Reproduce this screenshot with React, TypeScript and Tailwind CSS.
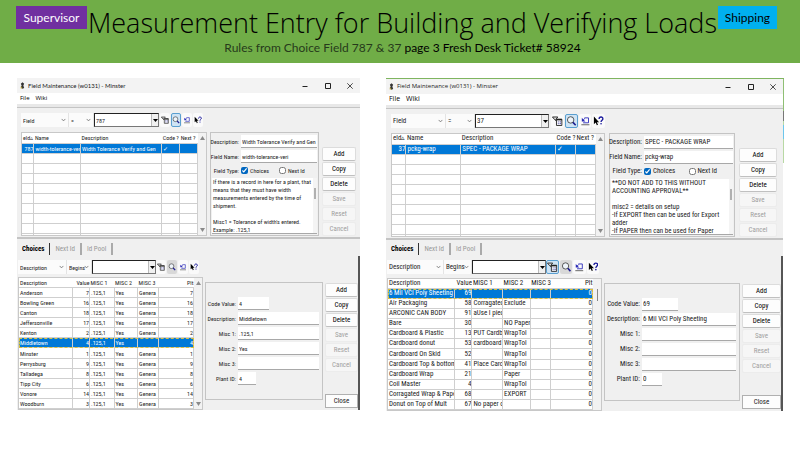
import React from 'react';

type Row = string[];

interface Screen {
  id: string;
  textClass: string;
  captionClass: string;
  menuClass: string;
  topPane: string;
  topGrid: string;
  topBar: string;
  topIcons: string;
  tabsClass: string;
  lowGrid: string;
  lowBar: string;
  lowIcons: string;
  lowBarGap: string;
  topCols: number[];
  lowCols: number[];
  labelTop: string;
  labelLow: string;
  codeWidth: string;
  plantWidth: string;
  query: string;
  field: Row;
  description: string;
  name: string;
  notes: string;
  choices: Row[];
  selected: number;
  treeActive: boolean;
  detail: { code: string; description: string; misc1: string; misc2: string; misc3: string; plant: string };
}

const tolerance: Screen = {
  id: 'tolerance',
  textClass: 'text-[6px]',
  captionClass: "text-[6px] font-['Lato','Open_Sans',sans-serif]",
  menuClass: 'text-[6px]',
  topPane: 'px-1',
  topGrid: 'grid-cols-[186fr_109fr_34fr] gap-x-[3px]',
  topBar: 'grid-cols-[48fr_25fr_65fr_48fr]',
  topIcons: 'pl-px pr-1',
  tabsClass: 'h-[17px]',
  lowGrid: 'grid-cols-[185fr_118fr_33fr]',
  lowBar: 'grid-cols-[49fr_25fr_64fr_47fr]',
  lowIcons: 'pr-1',
  lowBarGap: 'mb-[3px]',
  topCols: [12, 47, 82, 18, 18],
  lowCols: [55, 17, 25, 24, 21, 36],
  labelTop: 'w-[27px]',
  labelLow: 'w-[30px]',
  codeWidth: 'w-[31px]',
  plantWidth: 'w-[18px]',
  query: '787',
  field: ['787', 'width-tolerance-veri', 'Width Tolerance Verify and Gen', '✓', ''],
  description: 'Width Tolerance Verify and Gen',
  name: 'width-tolerance-veri',
  notes:
    "If there is a record in here for a plant, that\nmeans that they must have width\nmeasurements entered by the time of\nshipment.\n\nMisc1 = Tolerance of width's entered.\nExample: .125,1",
  choices: [
    ['Anderson', '7', '.125,1', 'Yes', 'Genera', '7'],
    ['Bowling Green', '16', '.125,1', 'Yes', 'Genera', '16'],
    ['Canton', '18', '.125,1', 'Yes', 'Genera', '18'],
    ['Jeffersonville', '17', '.125,1', 'Yes', 'Genera', '17'],
    ['Kenton', '2', '.125,1', 'Yes', 'Genera', '2'],
    ['Middletown', '4', '.125,1', 'Yes', '', '4'],
    ['Minster', '1', '.125,1', 'Yes', 'Genera', '1'],
    ['Perrysburg', '9', '.125,1', 'Yes', 'Genera', '9'],
    ['Talladega', '8', '.125,1', 'Yes', 'Genera', '8'],
    ['Tipp City', '6', '.125,1', 'Yes', 'Genera', '6'],
    ['Vonore', '14', '.125,1', 'Yes', 'Genera', '14'],
    ['Woodburn', '3', '.125,1', 'Yes', 'Genera', '3'],
  ],
  selected: 5,
  treeActive: false,
  detail: { code: '4', description: 'Middletown', misc1: '.125,1', misc2: 'Yes', misc3: '', plant: '4' },
};

const packaging: Screen = {
  id: 'packaging',
  textClass: 'text-[7px]',
  captionClass: "text-[6px] font-['Open_Sans','Noto_Sans',sans-serif]",
  menuClass: 'text-[7px]',
  topPane: 'pl-[5px] pr-[6px]',
  topGrid: 'grid-cols-[214fr_126fr_38fr] gap-x-1',
  topBar: 'grid-cols-[55fr_29fr_74fr_56fr]',
  topIcons: 'pl-[2px]',
  tabsClass: 'h-4',
  lowGrid: 'grid-cols-[215fr_136fr_39fr]',
  lowBar: 'grid-cols-[57fr_28fr_74fr_56fr]',
  lowIcons: 'pr-[3px]',
  lowBarGap: 'mb-1',
  topCols: [14, 55, 95, 20, 20],
  lowCols: [67, 18, 31, 28, 21, 42],
  labelTop: 'w-[31px]',
  labelLow: 'w-[35px]',
  codeWidth: 'w-[36px]',
  plantWidth: 'w-[20px]',
  query: '37',
  field: ['37', 'pckg-wrap', 'SPEC - PACKAGE WRAP', '✓', ''],
  description: 'SPEC - PACKAGE WRAP',
  name: 'pckg-wrap',
  notes:
    '**DO NOT ADD TO THIS WITHOUT\nACCOUNTING APPROVAL**\n\nmisc2 = details on setup\n-If EXPORT then can be used for Export\nadder\n-If PAPER then can be used for Paper',
  choices: [
    ['6 Mil VCI Poly Sheeting', '69', '', '', '', '0'],
    ['Air Packaging', '58', 'Corragatec', 'Exclude', '', '0'],
    ['ARCONIC CAN BODY', '91', 'aUse I piec', '', '', '0'],
    ['Bare', '30', '', 'NO Paper', '', '0'],
    ['Cardboard & Plastic', '13', 'PUT Cardb', 'WrapTol', '', '0'],
    ['Cardboard donut', '53', 'cardboard', 'WrapTol', '', '0'],
    ['Cardboard On Skid', '52', '', 'WrapTol', '', '0'],
    ['Cardboard Top & bottom', '41', 'Place Carc', 'WrapTol', '', '0'],
    ['Cardboard Wrap', '21', '', 'Paper', '', '0'],
    ['Coil Master', '4', '', 'WrapTol', '', '0'],
    ['Corragated Wrap & Pape', '68', '', 'EXPORT', '', '0'],
    ['Donut on Top of Mult', '67', 'No paper c', '', '', '0'],
  ],
  selected: 0,
  treeActive: true,
  detail: { code: '69', description: '6 Mil VCI Poly Sheeting', misc1: '', misc2: '', misc3: '', plant: '0' },
};

function TreeIcon() {
  return (
    <svg viewBox="0 0 12 12" className="h-full w-full" fill="none" stroke="#222" strokeWidth="1">
      <path d="M.5 1.500h6L4.500 4v1.500L3 4.500z" fill="#ddd" />
      <path d="M5 4h6v7H5z" fill="#fff" />
      <path d="M5 4.500h6" strokeWidth="1.600" />
      <path d="M6.500 7h1M8.500 7H10M6.500 9h1M8.500 9H10" stroke="#2a2a90" />
    </svg>
  );
}

function LensIcon() {
  return (
    <svg viewBox="0 0 12 12" className="h-full w-full" fill="none">
      <circle cx="5.200" cy="4.800" r="3.600" stroke="#333" strokeWidth="0.900" fill="#eef4fa" />
      <path d="M7.800 7.500l3 3.200" stroke="#1c1c90" strokeWidth="1.800" />
    </svg>
  );
}

function ReturnIcon() {
  return (
    <svg viewBox="0 0 12 12" className="h-full w-full" fill="none">
      <path d="M5 2.500h4.500v5.500H3.500" stroke="#2a2ab8" strokeWidth="1" />
      <path d="M2 2.500v4h4z" fill="#2a2ab8" />
      <path d="M3.500 5L5.500 3" stroke="#2a2ab8" />
      <path d="M1.500 10.200h9" stroke="#444" strokeWidth="0.900" />
    </svg>
  );
}

function HelpIcon() {
  return (
    <svg viewBox="0 0 12 12" className="h-full w-full" fill="none">
      <path d="M1 1v8.500l2-1.800 1.300 3 1.300-.6-1.300-2.800h2.500z" fill="#000" />
      <path d="M6.800 3.800c0-3 4.400-3 4.200-.2-.1 1.500-2 1.500-2 3.400" stroke="#1a1a9c" strokeWidth="1.500" />
      <circle cx="9" cy="9" r="0.900" fill="#1a1a9c" />
    </svg>
  );
}

function Chevron() {
  return (
    <svg viewBox="0 0 6 4" className="pointer-events-none absolute top-1/2 right-[2px] h-[3px] w-[5px] -translate-y-1/2" fill="none" stroke="#555" strokeWidth="0.900">
      <path d="M.5.5L3 3.200 5.500.5" />
    </svg>
  );
}

function Pick({ label, value }: { label: string; value: string }) {
  return (
    <span className="relative flex min-w-0 items-center border-r border-[#e4e4e4] bg-[#fbfbfb]">
      <select aria-label={label} className="h-full w-full appearance-none bg-transparent pl-[2px] outline-none">
        <option>{value}</option>
      </select>
      <Chevron />
    </span>
  );
}

function SearchBar({ cols, icons, first, second, query, treeActive, lensActive }: {
  cols: string; icons: string; first: string; second: string; query: string; treeActive: boolean; lensActive: boolean;
}) {
  const plain = 'min-w-0 flex-1 rounded-[2px] bg-[#fafafa] p-px';
  const lit = 'min-w-0 flex-1 rounded-[2px] border border-[#5a9fd0] bg-[#cfe4f5]';
  const pressed = 'min-w-0 flex-1 rounded-[2px] bg-[#d8d8d8] p-px';
  return (
    <div className={`grid h-[14px] ${cols}`}>
      <Pick label="Search by" value={first} />
      <Pick label="Match" value={second} />
      <span className="flex min-w-0 border border-[#777] border-t-[#222] border-l-[#222] bg-white">
        <input aria-label="Search for" defaultValue={query} className="min-w-0 flex-1 bg-transparent pl-px outline-none" />
        <button aria-label="Open list" className="flex w-[7px] items-center justify-center border-l border-[#bbb] bg-[#f0f0f0]">
          <svg viewBox="0 0 5 3" className="h-[3px] w-[5px]"><path d="M0 0h5L2.500 3z" /></svg>
        </button>
      </span>
      <span className={`flex gap-px ${icons}`}>
        <button aria-label="Browse" className={treeActive ? lit : plain}><TreeIcon /></button>
        <button aria-label="Find" className={lensActive ? lit : pressed}><LensIcon /></button>
        <button aria-label="Reload" className={plain}><ReturnIcon /></button>
        <button aria-label="Help" className={plain}><HelpIcon /></button>
      </span>
    </div>
  );
}

function ColGroup({ widths }: { widths: number[] }) {
  const total = widths.reduce((a, b) => a + b, 0);
  return (
    <colgroup>
      {widths.map((w, i) => <col key={i} style={{ width: `${(w / total) * 100}%` }} />)}
    </colgroup>
  );
}

function ScrollBar({ thumb }: { thumb?: boolean }) {
  return (
    <div className="flex w-[8px] shrink-0 flex-col items-center justify-between bg-[#f2f2f2] py-[3px]">
      {thumb ? (
        <div className="mt-[7px] h-3 w-px bg-[#888]" />
      ) : (
        <>
          <svg viewBox="0 0 5 4" className="h-1 w-[5px]" fill="#8a8a8a"><path d="M0 4h5L2.500 0z" /></svg>
          <svg viewBox="0 0 5 4" className="h-1 w-[5px]" fill="#8a8a8a"><path d="M0 0h5L2.500 4z" /></svg>
        </>
      )}
    </div>
  );
}

function Buttons({ pad, close }: { pad: string; close?: boolean }) {
  const names = ['Add', 'Copy', 'Delete', 'Save', 'Reset', 'Cancel'];
  return (
    <div className={`flex min-w-0 flex-col gap-px text-[7px] ${pad}`}>
      {names.map((n, i) => (
        <button
          key={n}
          disabled={i > 2}
          className={`h-[14px] rounded-[2px] border text-center ${i > 2 ? 'border-[#ececec] bg-[#f6f6f6] text-[#a0a0a0]' : 'border-[#dcdcdc] border-b-[#c0c0c0] bg-[#fdfdfd] text-black'}`}
        >
          {n}
        </button>
      ))}
      {close && <button className="mt-auto mb-[2px] h-[14px] border border-[#b0b0b0] bg-[#fdfdfd] text-center">Close</button>}
    </div>
  );
}

function Field({ id, label, value, labelClass, inputClass }: {
  id: string; label: string; value: string; labelClass: string; inputClass: string;
}) {
  return (
    <div className="flex h-[13px] items-stretch gap-[2px]">
      <label htmlFor={id} className={`flex shrink-0 items-center justify-end whitespace-nowrap ${labelClass}`}>{label}</label>
      <input id={id} defaultValue={value} className={`min-w-0 border-b border-[#a8a8a8] bg-white pl-px outline-none ${inputClass}`} />
    </div>
  );
}

function FieldWindow({ s }: { s: Screen }) {
  const cell = 'overflow-hidden whitespace-nowrap border-r border-b border-[#cfcfcf] p-0 pl-px leading-[9px]';
  const head = 'overflow-hidden whitespace-nowrap border-b border-[#cfcfcf] p-0 pl-px text-left font-normal leading-[9px]';
  const emptyRows = Array.from({ length: 9 }, () => ['', '', '', '', '']);
  const d = s.detail;
  return (
    <section className={`flex min-w-0 flex-1 flex-col bg-[#f0f0f0] font-['Liberation_Sans_Narrow','Roboto_Condensed','Liberation_Sans',sans-serif] text-[#222] ${s.textClass}`}>
      <header className={`flex h-[15px] items-center bg-[#f3f3f3] pl-[3px] ${s.captionClass}`}>
        <svg viewBox="0 0 6 8" className="mr-[3px] h-[7px] w-[5px]">
          <path d="M3 0l2 2-1 2 1 3-2 1-2-2 1-2-1-2z" fill="#333" />
          <path d="M1 5l2 2-2 1z" fill="#b5a12c" />
        </svg>
        <h2>Field Maintenance (w0131) - Minster</h2>
        <span className="ml-auto flex w-[58px] justify-between pr-[7px]">
          <button aria-label="Minimize"><svg viewBox="0 0 6 6" className="h-[6px] w-[6px]" stroke="#222" fill="none"><path d="M.5 3.500h5" /></svg></button>
          <button aria-label="Maximize"><svg viewBox="0 0 6 6" className="h-[6px] w-[6px]" stroke="#222" fill="none"><path d="M.5.5h5v5h-5z" /></svg></button>
          <button aria-label="Close window"><svg viewBox="0 0 6 6" className="h-[6px] w-[6px]" stroke="#222" strokeWidth=".8" fill="none"><path d="M.3.3l5.400 5.400M5.700.3L.3 5.700" /></svg></button>
        </span>
      </header>
      <nav className={`flex h-[11px] items-center gap-[6px] bg-white pl-[3px] font-['Open_Sans','Noto_Sans',sans-serif] text-black ${s.menuClass}`}>
        <button>File</button>
        <button>Wiki</button>
      </nav>
      <div className="h-1 border-b border-[#c4c4c4] bg-[#e8e8e8]" />

      <div className={`flex flex-col border-b-2 border-[#c4c4c4] pt-[5px] pb-px ${s.topPane}`}>
        <div className={`mb-[5px] grid ${s.topGrid}`}>
          <SearchBar cols={s.topBar} icons={s.topIcons} first="Field" second="=" query={s.query} treeActive={false} lensActive />
        </div>
        <div className={`grid ${s.topGrid}`}>
          <div className="flex h-[104px] overflow-hidden border border-[#c8c8c8] bg-white">
            <table className="w-full table-fixed border-collapse self-start">
              <ColGroup widths={s.topCols} />
              <thead>
                <tr className="h-[10px]">
                  {['eld▵', 'Name', 'Description', 'Code ?', 'Next ?'].map((h) => <th key={h} className={head}>{h}</th>)}
                </tr>
              </thead>
              <tbody>
                {[s.field, ...emptyRows].map((r, i) => (
                  <tr key={i} className={i === 0 ? 'h-[10px] bg-[#0078d7] text-white' : 'h-[10px]'}>
                    {r.map((c, j) => <td key={j} className={`${cell} ${j === 0 ? 'text-right' : ''}`}>{c}</td>)}
                  </tr>
                ))}
              </tbody>
            </table>
            <ScrollBar />
          </div>
          <div className="flex h-[104px] min-w-0 flex-col gap-[2px] border border-[#c4c4c4] px-px pt-[2px] pb-px">
            <Field id={`${s.id}-desc`} label="Description:" value={s.description} labelClass={s.labelTop} inputClass="flex-1" />
            <Field id={`${s.id}-name`} label="Field Name:" value={s.name} labelClass={s.labelTop} inputClass="flex-1" />
            <div className="flex h-[11px] items-center whitespace-nowrap">
              <span className={`mr-[2px] text-right ${s.labelTop}`}>Field Type:</span>
              <label className="flex flex-1 items-center gap-[2px]">
                <input type="checkbox" defaultChecked className="h-[7px] w-[7px] accent-[#0067c0]" />Choices
              </label>
              <label className="flex flex-1 items-center gap-[2px]">
                <input type="checkbox" className="h-[7px] w-[7px]" />Next Id
              </label>
            </div>
            <div className="flex min-h-0 flex-1 border-b border-[#a8a8a8] bg-white">
              <textarea aria-label="Notes" defaultValue={s.notes} className="min-w-0 flex-1 resize-none overflow-hidden pl-px leading-[8px] whitespace-pre outline-none" />
              <div className="flex w-1 shrink-0 justify-center bg-[#f4f4f4] pt-[10px]"><div className="h-[11px] w-[2px] bg-[#b0b0b0]" /></div>
            </div>
          </div>
          <Buttons pad="pt-[15px]" />
        </div>
      </div>

      <div role="tablist" className={`flex items-end pb-px pl-[5px] text-[7px] ${s.tabsClass}`}>
        <button role="tab" aria-selected className="h-3 border-r border-[#333] pr-[5px] font-bold text-black">Choices</button>
        <button role="tab" className="h-3 border-r-2 border-[#aaa] px-[5px] text-[#999]">Next Id</button>
        <button role="tab" className="h-3 border-r-2 border-[#aaa] px-[5px] text-[#999]">Id Pool</button>
      </div>

      <div className="border-r-2 border-[#555] pt-1 pl-px">
        <div className={`grid gap-x-[2px] ${s.lowBarGap} ${s.lowGrid}`}>
          <SearchBar cols={s.lowBar} icons={s.lowIcons} first="Description" second="Begins" query="" treeActive={s.treeActive} lensActive={false} />
        </div>
        <div className={`grid gap-x-[2px] ${s.lowGrid}`}>
          <div className="flex overflow-hidden border border-[#c8c8c8] bg-white">
            <table className="h-[131px] w-full table-fixed border-collapse">
              <ColGroup widths={s.lowCols} />
              <thead>
                <tr>
                  {['Description', 'Value', 'MISC 1', 'MISC 2', 'MISC 3', 'Plt'].map((h, j) => (
                    <th key={h} className={`${head} ${j === 5 || j === 1 ? 'text-right' : ''}`}>{h}</th>
                  ))}
                </tr>
              </thead>
              <tbody>
                {s.choices.map((r, i) => (
                  <tr key={i} className={i === s.selected ? 'bg-[#0078d7] text-white outline-1 -outline-offset-1 outline-dashed outline-[#d8c040]' : ''}>
                    {r.map((c, j) => <td key={j} className={`${cell} ${j === 1 || j === 5 ? 'text-right' : ''}`}>{c}</td>)}
                  </tr>
                ))}
              </tbody>
            </table>
            <ScrollBar thumb={s.treeActive} />
          </div>
          <div className="mt-[5px] mb-[10px] flex min-w-0 flex-col gap-[2px] border border-[#c4c4c4] pt-[14px] pr-[3px]">
            <Field id={`${s.id}-code`} label="Code Value:" value={d.code} labelClass={s.labelLow} inputClass={s.codeWidth} />
            <Field id={`${s.id}-cdesc`} label="Description:" value={d.description} labelClass={s.labelLow} inputClass="flex-1" />
            <Field id={`${s.id}-m1`} label="Misc 1:" value={d.misc1} labelClass={s.labelLow} inputClass="flex-1" />
            <Field id={`${s.id}-m2`} label="Misc 2:" value={d.misc2} labelClass={s.labelLow} inputClass="flex-1" />
            <Field id={`${s.id}-m3`} label="Misc 3:" value={d.misc3} labelClass={s.labelLow} inputClass="flex-1" />
            <Field id={`${s.id}-plant`} label="Plant ID:" value={d.plant} labelClass={s.labelLow} inputClass={s.plantWidth} />
          </div>
          <Buttons pad="pt-[6px]" close />
        </div>
      </div>
    </section>
  );
}

export default function App() {
  return (
    <div className="min-h-screen bg-white font-['Open_Sans','Noto_Sans',sans-serif]">
      <header className="flex h-[63px] justify-between bg-[#70ad47] pr-[23px] pl-4 text-black">
        <div className="mt-[6px] flex h-[23px] w-[71px] shrink-0 items-center justify-center bg-[#7030a0] font-['Lato','Open_Sans',sans-serif] text-xs text-white">Supervisor</div>
        <div className="min-w-0 flex-1 text-center whitespace-nowrap">
          <h1 className="mt-[5px] text-[27px] leading-9 font-light">Measurement Entry for Building and Verifying Loads</h1>
          <p className="font-['Lato','Open_Sans',sans-serif] text-xs leading-[14px]"><span className="text-[#263a1b]">Rules from Choice Field 787 &amp; 37</span> page 3 Fresh Desk Ticket# 58924</p>
        </div>
        <div className="mt-[6px] flex h-[23px] w-[59px] shrink-0 items-center justify-center bg-[#00b0f0] font-['Lato','Open_Sans',sans-serif] text-xs">Shipping</div>
      </header>
      <main className="grid grid-cols-[343fr_398fr] items-start gap-[26px] pt-[15px] pr-4 pl-[17px]">
        <FieldWindow s={tolerance} />
        <div className="flex min-w-0 border-t border-[#7fb560]">
          <FieldWindow s={packaging} />
          <div className="flex w-px flex-col">
            <div className="h-8 bg-[#8fbf74]" />
            <div className="h-[10px] bg-[#777]" />
            <div className="h-1 bg-[#b8d8a4]" />
            <div className="h-[14px] bg-[#6cc6ec]" />
            <div className="h-6 bg-[#b8d8a4]" />
          </div>
        </div>
      </main>
    </div>
  );
}
